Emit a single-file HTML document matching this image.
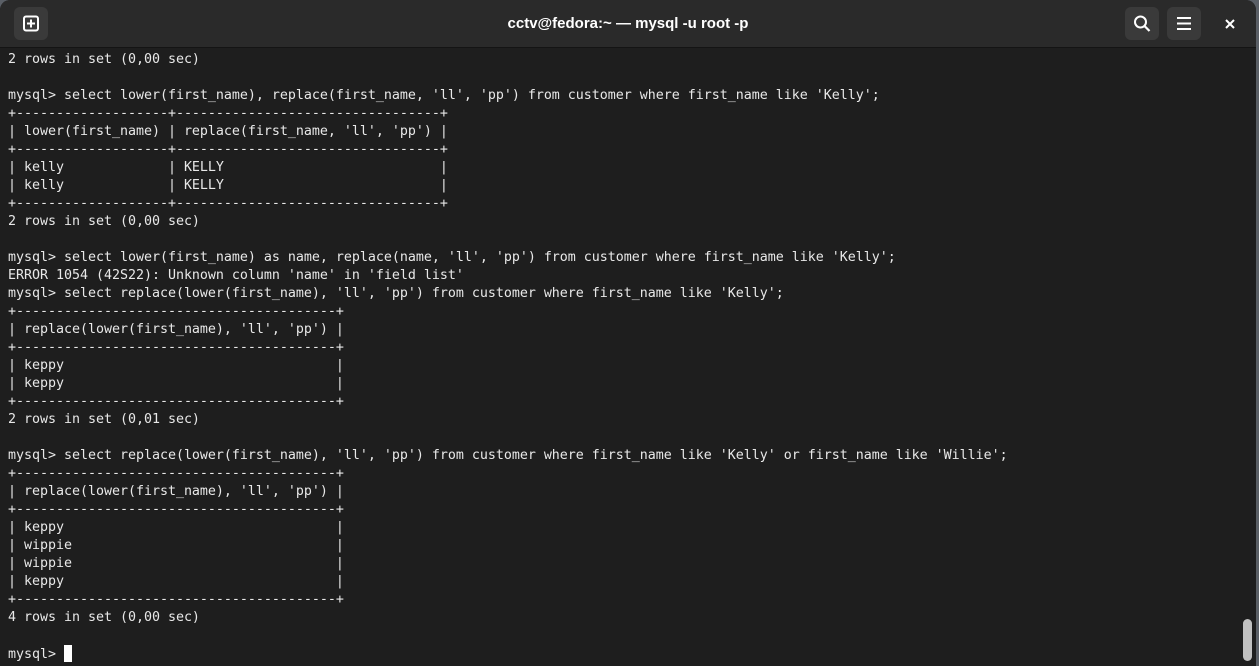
<!DOCTYPE html>
<html><head><meta charset="utf-8"><style>
html,body{margin:0;padding:0;width:1259px;height:666px;overflow:hidden;background:#5a5f66;}
.win{position:absolute;left:0;top:0;width:1256px;height:666px;background:#1e1e1e;border-radius:10px 10px 0 0;overflow:hidden;}
.hdr{position:absolute;left:0;top:0;right:0;height:47px;background:#2a2a2a;border-bottom:1px solid #141414;}
.title{position:absolute;left:0;right:0;top:15px;text-align:center;color:#fff;font:bold 15px "Liberation Sans",sans-serif;}
.btn{position:absolute;top:7px;width:34px;height:33px;background:#3a3a3a;border-radius:6px;}
pre{position:absolute;left:8px;top:51px;margin:0;color:#e8e8e8;font:13.33px/18px "DejaVu Sans Mono","Liberation Mono",monospace;letter-spacing:-0.027px;}
.cur{display:inline-block;width:8px;height:17px;background:#fff;vertical-align:-4px;}
.sb{position:absolute;left:1243px;top:619px;width:9px;height:42px;background:#c0c0c0;border-radius:5px;}
</style></head><body>
<div class="win">
<div class="hdr">
<div class="btn" style="left:14px"><svg width="34" height="33"><rect x="10" y="9.5" width="14" height="14" rx="2" fill="none" stroke="#fff" stroke-width="2"/><path d="M17 12.5v8M13 16.5h8" stroke="#fff" stroke-width="2"/></svg></div>
<div class="title">cctv@fedora:~ — mysql -u root -p</div>
<div class="btn" style="left:1125px"><svg width="34" height="33"><circle cx="15.5" cy="15" r="5.5" fill="none" stroke="#fff" stroke-width="2"/><path d="M19.5 19l5 5" stroke="#fff" stroke-width="2.2"/></svg></div>
<div class="btn" style="left:1167px"><svg width="34" height="33"><path d="M10 11h14M10 16.5h14M10 22h14" stroke="#fff" stroke-width="2"/></svg></div>
<svg style="position:absolute;left:1222px;top:16px" width="16" height="16"><path d="M4 4l8 8M12 4l-8 8" stroke="#fff" stroke-width="2"/></svg>
</div>
<pre>2 rows in set (0,00 sec)

mysql&gt; select lower(first_name), replace(first_name, 'll', 'pp') from customer where first_name like 'Kelly';
+-------------------+---------------------------------+
| lower(first_name) | replace(first_name, 'll', 'pp') |
+-------------------+---------------------------------+
| kelly             | KELLY                           |
| kelly             | KELLY                           |
+-------------------+---------------------------------+
2 rows in set (0,00 sec)

mysql&gt; select lower(first_name) as name, replace(name, 'll', 'pp') from customer where first_name like 'Kelly';
ERROR 1054 (42S22): Unknown column 'name' in 'field list'
mysql&gt; select replace(lower(first_name), 'll', 'pp') from customer where first_name like 'Kelly';
+----------------------------------------+
| replace(lower(first_name), 'll', 'pp') |
+----------------------------------------+
| keppy                                  |
| keppy                                  |
+----------------------------------------+
2 rows in set (0,01 sec)

mysql&gt; select replace(lower(first_name), 'll', 'pp') from customer where first_name like 'Kelly' or first_name like 'Willie';
+----------------------------------------+
| replace(lower(first_name), 'll', 'pp') |
+----------------------------------------+
| keppy                                  |
| wippie                                 |
| wippie                                 |
| keppy                                  |
+----------------------------------------+
4 rows in set (0,00 sec)

mysql&gt; <span class="cur"></span></pre>
<div class="sb"></div>
</div>
</body></html>
